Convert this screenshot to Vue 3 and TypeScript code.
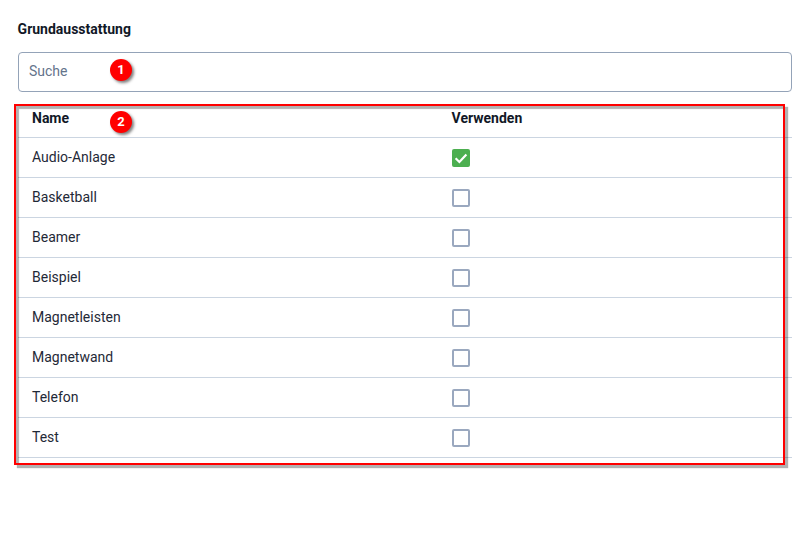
<script setup lang="ts">
import { ref } from 'vue'

interface Equipment {
  name: string
  used: boolean
}

const search = ref<string>('')
const items = ref<Equipment[]>([
  { name: 'Audio-Anlage', used: true },
  { name: 'Basketball', used: false },
  { name: 'Beamer', used: false },
  { name: 'Beispiel', used: false },
  { name: 'Magnetleisten', used: false },
  { name: 'Magnetwand', used: false },
  { name: 'Telefon', used: false },
  { name: 'Test', used: false }
])
</script>

<template>
  <div class="page">
    <h2 class="title">Grundausstattung</h2>
    <input v-model="search" class="search" type="text" placeholder="Suche">

    <div class="table">
      <div class="row head">
        <div class="col-name">Name</div>
        <div class="col-use">Verwenden</div>
      </div>
      <div v-for="item in items" :key="item.name" class="row">
        <div class="col-name">{{ item.name }}</div>
        <div class="col-use">
          <label class="check" :class="{ checked: item.used }">
            <input v-model="item.used" type="checkbox">
            <svg v-if="item.used" viewBox="0 0 18 18" width="18" height="18">
              <path d="M3.6 9.2 7.4 13 14.4 5.4" fill="none" stroke="#fff" stroke-width="2.2" />
            </svg>
          </label>
        </div>
      </div>
    </div>

    <div class="marker-box"></div>
    <span class="badge badge-one">1</span>
    <span class="badge badge-two">2</span>
  </div>
</template>

<style>
html,
body {
  margin: 0;
  background: #fff;
}
</style>

<style scoped>
.page {
  position: relative;
  box-sizing: border-box;
  width: 803px;
  height: 536px;
  padding: 21px 11px 0 18px;
  font-family: Roboto, "Liberation Sans", sans-serif;
  font-size: 14px;
  color: #1f2937;
  overflow: hidden;
}

.title {
  margin: 0 0 14px -0.4px;
  font-size: 14px;
  line-height: 17px;
  font-weight: 700;
  color: #111827;
}

.search {
  display: block;
  box-sizing: border-box;
  width: 100%;
  height: 40px;
  padding: 0 10px 2px;
  border: 1px solid #94a3b8;
  border-radius: 4px;
  outline: none;
  font-family: inherit;
  font-size: 14px;
  color: #1f2937;
}

.search::placeholder {
  color: #64748b;
  opacity: 1;
}

.table {
  margin-top: 6px;
}

.row {
  display: flex;
  align-items: center;
  box-sizing: border-box;
  height: 40px;
  padding-left: 14px;
  border-bottom: 1px solid #cbd5e1;
  line-height: 17px;
}

.row .col-name {
  width: 419.6px;
}

.head {
  font-weight: 700;
  color: #111827;
}

.head .col-name,
.head .col-use {
  margin-top: 2px;
}

.check {
  display: block;
  box-sizing: border-box;
  width: 18px;
  height: 18px;
  border: 2px solid #9aa8bf;
  border-radius: 2px;
  position: relative;
  margin-left: 0.4px;
}

.check input {
  position: absolute;
  inset: 0;
  margin: 0;
  opacity: 0;
}

.check.checked {
  border: 0;
  background: #4caf50;
}

.check svg {
  display: block;
}

.marker-box {
  position: absolute;
  left: 14px;
  top: 104px;
  width: 771px;
  height: 361px;
  box-sizing: border-box;
  border: 2px solid #f00;
  box-shadow: 3px 3px 1px rgba(0, 0, 0, 0.3), inset 3px 3px 1px rgba(0, 0, 0, 0.3);
}

.badge {
  position: absolute;
  left: 110px;
  width: 22px;
  height: 22px;
  border-radius: 50%;
  background: #f00;
  box-shadow: 2px 2px 3px rgba(0, 0, 0, 0.5);
  color: #fff;
  font-size: 13px;
  font-weight: 700;
  line-height: 22px;
  text-align: center;
}

.badge-one {
  top: 59px;
}

.badge-two {
  top: 111px;
}
</style>
